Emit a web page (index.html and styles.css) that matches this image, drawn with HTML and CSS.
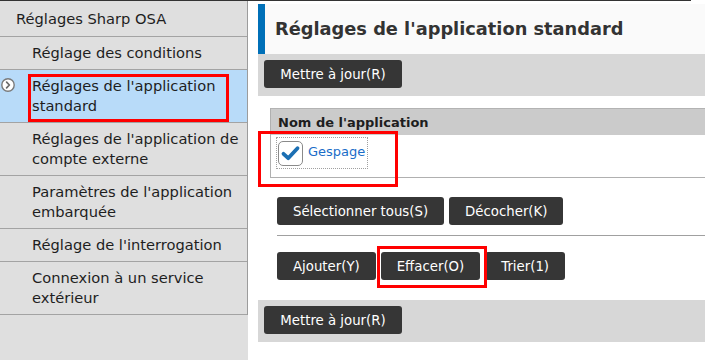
FILE: index.html
```html
<!DOCTYPE html>
<html lang="fr">
<head>
<meta charset="utf-8">
<title>Réglages de l'application standard</title>
<link rel="stylesheet" href="styles.css">
</head>
<body>
<div class="topline"></div>
<div class="layout">
  <nav class="sidebar">
    <ul class="menu">
      <li class="menu-head">Réglages Sharp OSA</li>
      <li class="menu-item">Réglage des conditions</li>
      <li class="menu-item selected">
        <svg class="sel-icon" width="14" height="14" viewBox="0 0 14 14"><circle cx="7" cy="7" r="6.2" fill="#fff" stroke="#7a7a7a" stroke-width="1.4"/><path d="M5.6 4.2 L8.4 7 L5.6 9.8" fill="none" stroke="#6a6a6a" stroke-width="1.7" stroke-linecap="round" stroke-linejoin="round"/></svg>
        <span>Réglages de l'application standard</span>
        <div class="redbox rb-menu"></div>
      </li>
      <li class="menu-item">Réglages de l'application de compte externe</li>
      <li class="menu-item">Paramètres de l'application embarquée</li>
      <li class="menu-item">Réglage de l'interrogation</li>
      <li class="menu-item">Connexion à un service extérieur</li>
    </ul>
  </nav>
  <main class="main">
    <h1 class="title">Réglages de l'application standard</h1>
    <div class="toolbar"><button class="btn btn-update">Mettre à jour(R)</button></div>
    <div class="table-wrap">
      <div class="table">
        <div class="thead">Nom de l'application</div>
        <div class="trow">
          <label class="app-label">
            <span class="checkbox"><svg width="21" height="21" viewBox="0 0 21 21"><path d="M3.5 10.8 L8.2 15.2 L17.5 5.2" fill="none" stroke="#1b6fb3" stroke-width="3.8" stroke-linecap="round" stroke-linejoin="round"/></svg></span>
            <span class="app-name">Gespage</span>
          </label>
        </div>
      </div>
      <div class="redbox rb-app"></div>
    </div>
    <div class="btn-row first">
      <button class="btn">Sélectionner tous(S)</button>
      <button class="btn">Décocher(K)</button>
    </div>
    <hr class="sep">
    <div class="btn-row second">
      <button class="btn">Ajouter(Y)</button>
      <span class="boxed"><button class="btn">Effacer(O)</button><span class="redbox rb-del"></span></span>
      <button class="btn">Trier(1)</button>
    </div>
    <div class="toolbar bottom"><button class="btn btn-update">Mettre à jour(R)</button></div>
  </main>
</div>
</body>
</html>
```
FILE: styles.css
```css
* { box-sizing: border-box; }
html, body { margin: 0; padding: 0; }
body {
  font-family: "DejaVu Sans", Verdana, sans-serif;
  background: #fff;
  color: #1e1e1e;
  width: 705px;
  height: 360px;
  overflow: hidden;
}
.topline {
  height: 1px;
  width: 691px;
  background: #333;
}
.layout {
  display: flex;
  height: 359px;
}
.sidebar {
  width: 248px;
  flex: none;
  background: #dfdfdf;
}
.menu {
  list-style: none;
  margin: 0;
  padding: 0;
  border-right: 1px solid #9c9c9c;
  font-size: 14.67px;
  line-height: 20px;
}
.menu li {
  border-bottom: 1px solid #a3a3a3;
  position: relative;
}
.menu-head {
  padding: 8px 8px 7px 16px;
}
.menu-item {
  padding: 6px 8px 6px 32px;
}
.menu-item.selected {
  background: #b8dbf9;
  display: flex;
  align-items: flex-start;
  padding-left: 1px;
  gap: 17px;
}
.sel-icon {
  flex: none;
  margin-top: 2px;
}
.redbox {
  position: absolute;
  border: 3px solid #ff0000;
  pointer-events: none;
}
.rb-menu {
  left: 28px;
  top: 4px;
  width: 201px;
  height: 48px;
}
.main {
  flex: 1;
  padding: 3px 0 0 10px;
}
.title {
  margin: 0;
  height: 50px;
  background: #fafafa;
  border-left: 7px solid #0070b8;
  padding-left: 10px;
  font-size: 17.8px;
  font-weight: bold;
  color: #333;
  line-height: 50px;
}
.toolbar {
  background: #d7d7d7;
  height: 42px;
  padding: 6px;
}
.btn {
  font-family: "DejaVu Sans", Verdana, sans-serif;
  font-size: 13.3px;
  color: #fff;
  background: #363636;
  border: none;
  border-radius: 3px;
  height: 28px;
  padding: 0 16px;
  margin: 0;
  cursor: pointer;
}
.btn-update {
  width: 138px;
  padding: 0;
}
.table-wrap {
  position: relative;
  margin: 12px 0 0 12px;
}
.table {
  border-left: 1px solid #b0b0b0;
  border-bottom: 1px solid #b0b0b0;
}
.thead {
  background: #cbcbcb;
  border-top: 1px solid #b3b3b3;
  height: 27px;
  padding: 0 7px;
  font-size: 13px;
  font-weight: bold;
  line-height: 28px;
  color: #1e1e1e;
}
.trow {
  height: 42px;
  padding: 3px 0 0 6px;
}
.app-label {
  display: inline-flex;
  align-items: center;
  gap: 5px;
  height: 30px;
  padding: 0 2px 0 1px;
  outline: 1px dotted #a0a0a0;
}
.checkbox {
  width: 25px;
  height: 25px;
  border: 1.5px solid #8a8a8a;
  border-radius: 5px;
  background: #fff;
  display: flex;
  align-items: center;
  justify-content: center;
}
.app-name {
  font-size: 13px;
  color: #1a6dc8;
  margin-top: -3px;
}
.rb-app {
  left: -12px;
  top: 23px;
  width: 140px;
  height: 56px;
}
.btn-row {
  display: flex;
  gap: 5px;
  padding-left: 19px;
}
.btn-row.first {
  margin-top: 19px;
}
.btn-row.second {
  margin-top: 16px;
}
.sep {
  margin: 10px 0 0 19px;
  border: none;
  border-top: 1px solid #a0a0a0;
  height: 0;
}
.boxed {
  position: relative;
  display: flex;
}
.rb-del {
  left: -4px;
  top: -6px;
  width: 110px;
  height: 42px;
}
.toolbar.bottom {
  margin-top: 20px;
}
```
